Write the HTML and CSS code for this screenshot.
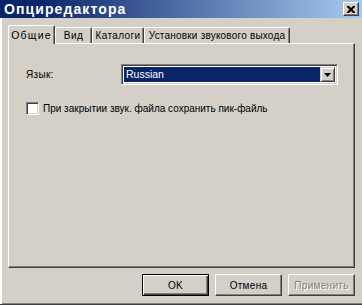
FILE: index.html
```html
<!DOCTYPE html>
<html lang="ru">
<head>
<meta charset="utf-8">
<link rel="stylesheet" href="styles.css">
</head>
<body>
<div class="window">
  <div class="titlebar">
    <span class="title">Опциредактора</span>
    <span class="close"><svg width="8" height="7" viewBox="0 0 8 7"><path d="M0 0h2l2 2 2-2h2v1l-2.5 2.5L8 6v1H6L4 5 2 7H0V6l2.5-2.5L0 1z" fill="#000"/></svg></span>
  </div>
  <div class="content">
    <div class="tabs">
      <div class="tab active">Общие</div>
      <div class="tab t-vid">Вид</div>
      <div class="tab t-cat">Каталоги</div>
      <div class="tab t-snd">Установки звукового выхода</div>
    </div>
    <div class="panel">
      <div class="lang-row">
        <span class="lang-label">Язык:</span>
        <div class="select">
          <span class="value">Russian</span>
          <span class="arrow"><svg width="7" height="4" viewBox="0 0 7 4"><path d="M0 0h7L3.5 4z" fill="#000"/></svg></span>
        </div>
      </div>
      <div class="check-row">
        <span class="box"></span>
        <span class="check-label">При закрытии звук. файла сохранить пик-файль</span>
      </div>
    </div>
    <div class="buttons">
      <div class="btn default">OK</div>
      <div class="btn">Отмена</div>
      <div class="btn disabled">Применить</div>
    </div>
  </div>
</div>
</body>
</html>
```
FILE: styles.css
```css
* { box-sizing: border-box; }
html, body { margin: 0; padding: 0; }
body { width: 362px; height: 305px; overflow: hidden; background: #d4d0c8; font-family: "Liberation Sans", Arial, sans-serif; font-size: 10px; color: #000; }
.window { width: 362px; height: 305px; background: #d4d0c8; display: flex; flex-direction: column; border-bottom: 1px solid #404040; box-shadow: inset 0 -1px #808080; }
.titlebar { height: 18px; flex: none; display: flex; align-items: center; justify-content: space-between; padding: 0 3px 0 4px; background: linear-gradient(90deg, #0a246a 0%, #0a246a 10%, #a6caf0 100%); }
.title { color: #fff; font-weight: bold; font-size: 14px; letter-spacing: 1.1px; }
.close { width: 16px; height: 14px; background: #d4d0c8; display: flex; align-items: center; justify-content: center; border-top: 1px solid #fff; border-left: 1px solid #fff; border-right: 1px solid #404040; border-bottom: 1px solid #404040; box-shadow: inset -1px -1px #808080; }
.content { flex: 1; display: flex; flex-direction: column; padding: 7px 7px 0 8px; box-shadow: inset 2px 0 #fff, inset 1px 0 #d4d0c8; }
.tabs { display: flex; align-items: flex-end; height: 18px; position: relative; z-index: 1; white-space: nowrap; }
.tab { height: 16px; border-top: 1px solid #fff; border-left: 1px solid #fff; border-right: 1px solid #404040; box-shadow: inset -1px 0 #808080; border-radius: 2px 2px 0 0; padding: 2px 0 0; text-align: center; letter-spacing: 0.4px; }
.tab.active { height: 19px; width: 47px; margin-bottom: -1px; background: #d4d0c8; padding-top: 3px; letter-spacing: 1.2px; font-size: 10.5px; }
.t-vid { width: 37px; }
.t-cat { width: 52px; }
.t-snd { width: 146px; letter-spacing: 0.2px; }
.panel { width: 347px; height: 225px; border-top: 1px solid #fff; border-left: 1px solid #fff; border-right: 1px solid #404040; border-bottom: 1px solid #404040; box-shadow: inset -1px -1px #808080; padding: 20px 0 0 17px; }
.lang-row { display: flex; align-items: center; }
.lang-label { width: 95px; letter-spacing: 0.3px; }
.select { width: 217px; height: 21px; display: flex; padding: 2px; border-top: 1px solid #808080; border-left: 1px solid #808080; border-right: 1px solid #fff; border-bottom: 1px solid #fff; box-shadow: inset 1px 1px #404040, inset -1px -1px #d4d0c8; background: #fff; }
.value { flex: 1; background: #0a246a; color: #fff; padding-left: 2px; line-height: 15px; font-size: 10.5px; }
.arrow { width: 15px; flex: none; background: #d4d0c8; display: flex; align-items: center; justify-content: center; border-top: 1px solid #d4d0c8; border-left: 1px solid #d4d0c8; border-right: 1px solid #404040; border-bottom: 1px solid #404040; box-shadow: inset 1px 1px #fff, inset -1px -1px #808080; }
.check-row { display: flex; align-items: center; margin-top: 17px; }
.box { width: 13px; height: 13px; background: #fff; border-top: 1px solid #808080; border-left: 1px solid #808080; border-right: 1px solid #fff; border-bottom: 1px solid #fff; box-shadow: inset 1px 1px #404040, inset -1px -1px #d4d0c8; margin-right: 4px; }
.check-label { letter-spacing: 0; }
.buttons { display: flex; justify-content: flex-end; gap: 6px; margin-top: 6px; }
.btn { width: 67px; height: 22px; display: flex; align-items: center; justify-content: center; border-top: 1px solid #fff; border-left: 1px solid #fff; border-right: 1px solid #404040; border-bottom: 1px solid #404040; box-shadow: inset -1px -1px #808080; letter-spacing: 0.3px; }
.btn.default { border: 1px solid #000; box-shadow: inset 1px 1px #fff, inset -1px -1px #404040, inset -2px -2px #808080; }
.btn.disabled { color: #808080; text-shadow: 1px 1px #fff; }
```
